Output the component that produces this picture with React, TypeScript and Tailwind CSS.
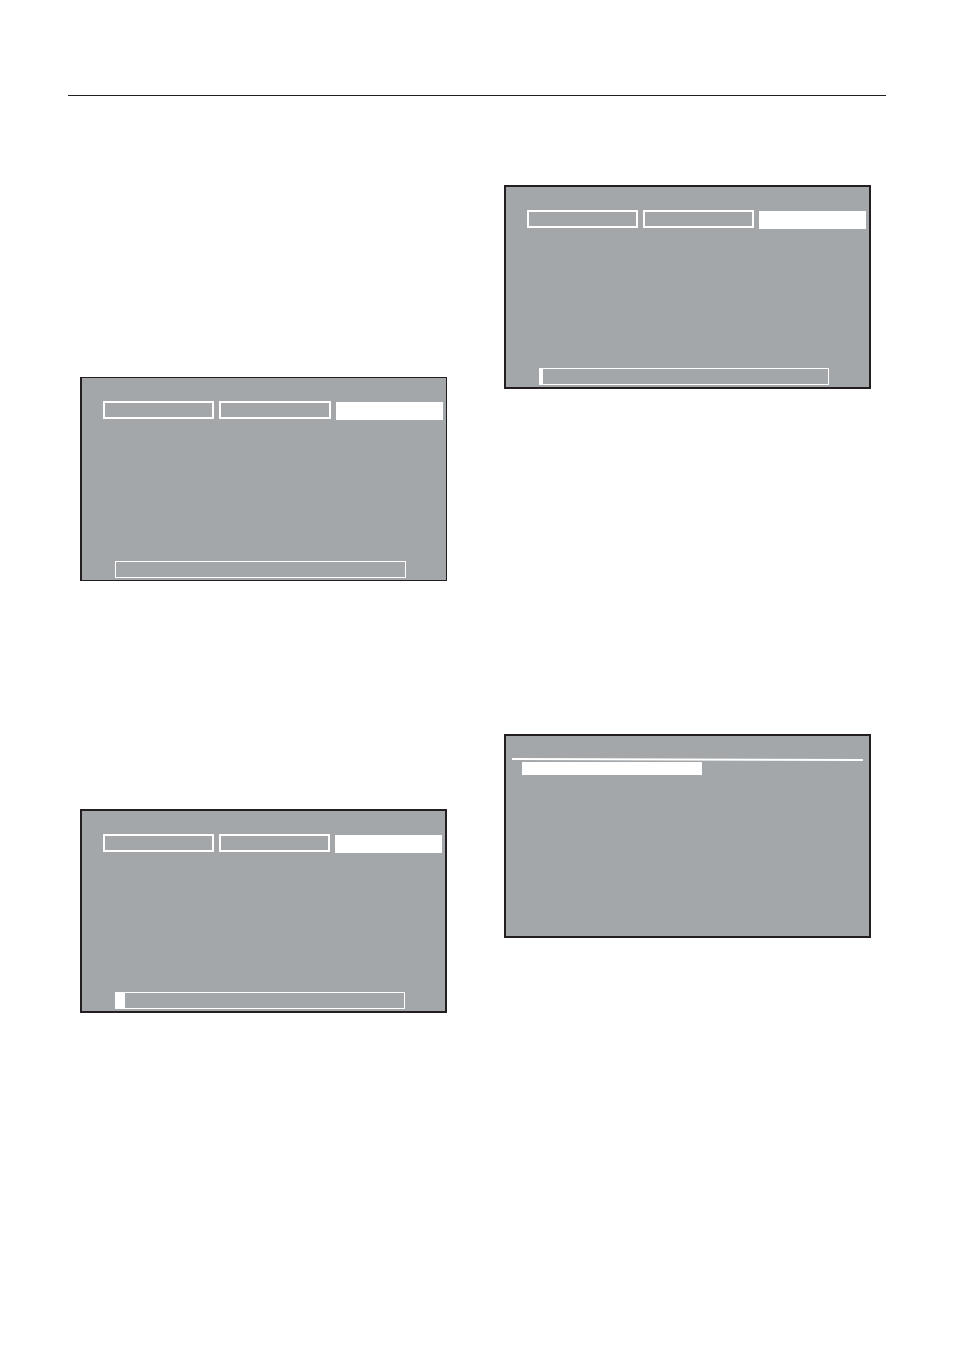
import clsx from "clsx";

interface ScreenProps {
  progress: number;
  border?: string;
}

const TABS = ["First", "Second", "Third"];

function TabBar({ active }: { active: number }) {
  return (
    <div role="tablist" className="grid grid-cols-[111fr_111fr_107fr] items-start gap-[5px] pl-[21px] pr-[3px]">
      {TABS.map((t, i) => (
        <button
          key={t}
          type="button"
          role="tab"
          aria-label={t}
          aria-selected={i === active}
          className={clsx("h-[18px] border-2 border-white", i === active && "mt-px bg-white")}
        />
      ))}
    </div>
  );
}

function ProgressScreen({ progress, border = "border-2" }: ScreenProps) {
  return (
    <section className={clsx("flex h-[204px] flex-col justify-between border-[#231f20] bg-[#a3a7aa] pt-[23px] pb-0.5", border)}>
      <TabBar active={2} />
      <div
        role="progressbar"
        aria-label="Progress"
        aria-valuenow={progress}
        className="mr-10 ml-[33px] h-[17px] border border-white"
      >
        <div className="h-full bg-white" style={{ width: `${progress}%` }} />
      </div>
    </section>
  );
}

function ListScreen() {
  return (
    <section className="h-[204px] border-2 border-[#231f20] bg-[#a3a7aa] px-1.5 pt-[22px]">
      {/* divider drops slightly towards the right */}
      <svg viewBox="0 0 352 3" preserveAspectRatio="none" className="block h-[3px] w-full" aria-hidden="true">
        <line x1="0" y1="1" x2="352" y2="2" stroke="#fff" strokeWidth="2" />
      </svg>
      <button type="button" aria-label="Selected item" className="mt-px ml-2.5 block h-[13px] w-[180px] bg-white" />
    </section>
  );
}

export default function App() {
  return (
    <div className="min-h-screen bg-white font-['Liberation_Sans',sans-serif]">
      <header className="pt-[95px] pr-[69px] pl-[68px]">
        <hr className="border-t border-[#231f20]" />
      </header>

      <main className="grid grid-cols-2 gap-[57px] pt-[89px] pr-[84px] pb-20 pl-20">
        <div className="flex flex-col gap-[228px] pt-48">
          <ProgressScreen progress={0} border="border border-l-2" />
          <ProgressScreen progress={3} />
        </div>
        <div className="flex flex-col gap-[345px]">
          <ProgressScreen progress={1} />
          <ListScreen />
        </div>
      </main>
    </div>
  );
}
